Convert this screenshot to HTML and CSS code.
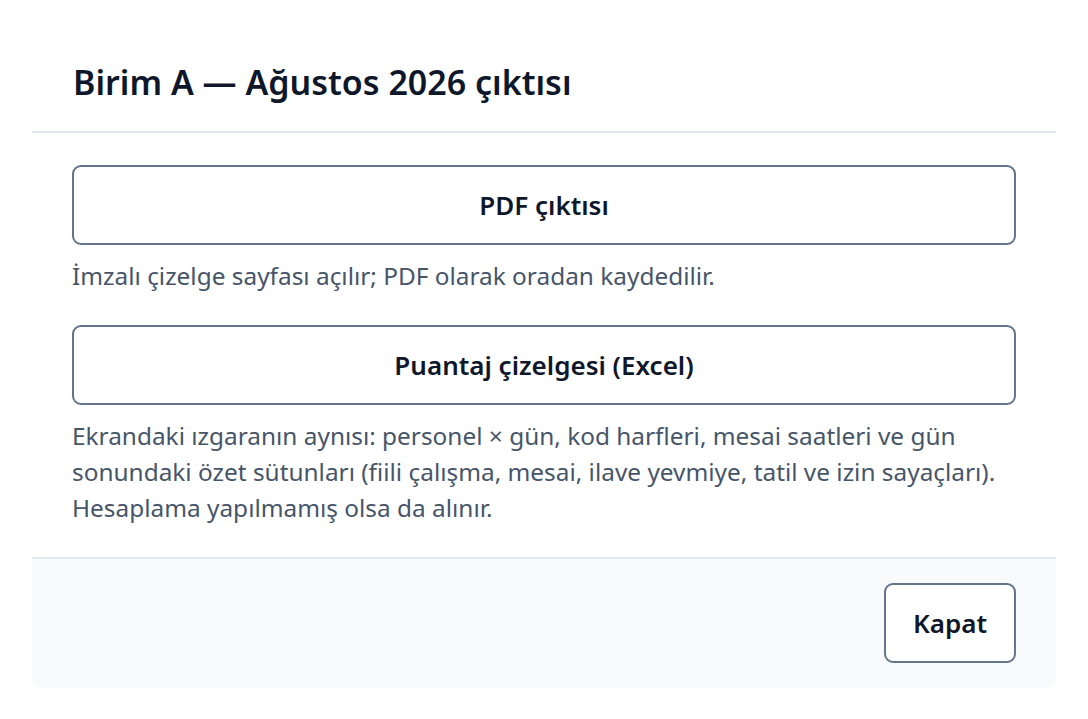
FILE: index.html
```html
<!DOCTYPE html>
<html lang="tr">
<head>
<meta charset="utf-8">
<link rel="stylesheet" href="styles.css">
</head>
<body>
<div class="modal">
  <div class="modal-header">
    <h2 class="modal-title">Birim A — Ağustos 2026 çıktısı</h2>
  </div>
  <div class="modal-body">
    <div class="option">
      <button class="btn btn-block">PDF çıktısı</button>
      <p class="hint">İmzalı çizelge sayfası açılır; PDF olarak oradan kaydedilir.</p>
    </div>
    <div class="option">
      <button class="btn btn-block">Puantaj çizelgesi (Excel)</button>
      <p class="hint">Ekrandaki ızgaranın aynısı: personel × gün, kod harfleri, mesai saatleri ve gün sonundaki özet sütunları (fiili çalışma, mesai, ilave yevmiye, tatil ve izin sayaçları). Hesaplama yapılmamış olsa da alınır.</p>
    </div>
  </div>
  <div class="modal-footer">
    <button class="btn btn-close">Kapat</button>
  </div>
</div>
</body>
</html>
```

FILE: styles.css
```css
* { box-sizing: border-box; }
html, body { margin: 0; background: #ffffff; }
body {
  padding: 32px;
  font-family: "Noto Sans", "Open Sans", sans-serif;
  color: #0f172a;
}
.modal {
  background: #ffffff;
  border-radius: 12px;
  box-shadow: 0 0 2px rgba(15, 23, 42, 0.04);
  overflow: hidden;
}
.modal-header {
  padding: 26px 40px 0 41px;
  height: 101px;
  border-bottom: 2px solid #e2e8f0;
}
.modal-title {
  margin: 0;
  font-size: 34px;
  font-weight: 600;
  line-height: 48px;
  color: #0f172a;
}
.modal-body {
  padding: 32px 40px 31px;
}
.option { margin-bottom: 31px; }
.option:last-child { margin-bottom: 0; }
.btn {
  font-family: inherit;
  background: #ffffff;
  border: 2px solid #64748b;
  border-radius: 9px;
  color: #0f172a;
  font-size: 26px;
  font-weight: 600;
  cursor: pointer;
}
.btn-block {
  display: block;
  width: 100%;
  height: 80px;
}
.hint {
  margin: 13px 0 0;
  font-size: 24.4px;
  line-height: 36px;
  color: #475569;
}
.modal-footer {
  background: #f8fafc;
  border-top: 2px solid #e2e8f0;
  padding: 24px 40px 24px;
  display: flex;
  justify-content: flex-end;
}
.btn-close {
  width: 132px;
  height: 80px;
}
```
